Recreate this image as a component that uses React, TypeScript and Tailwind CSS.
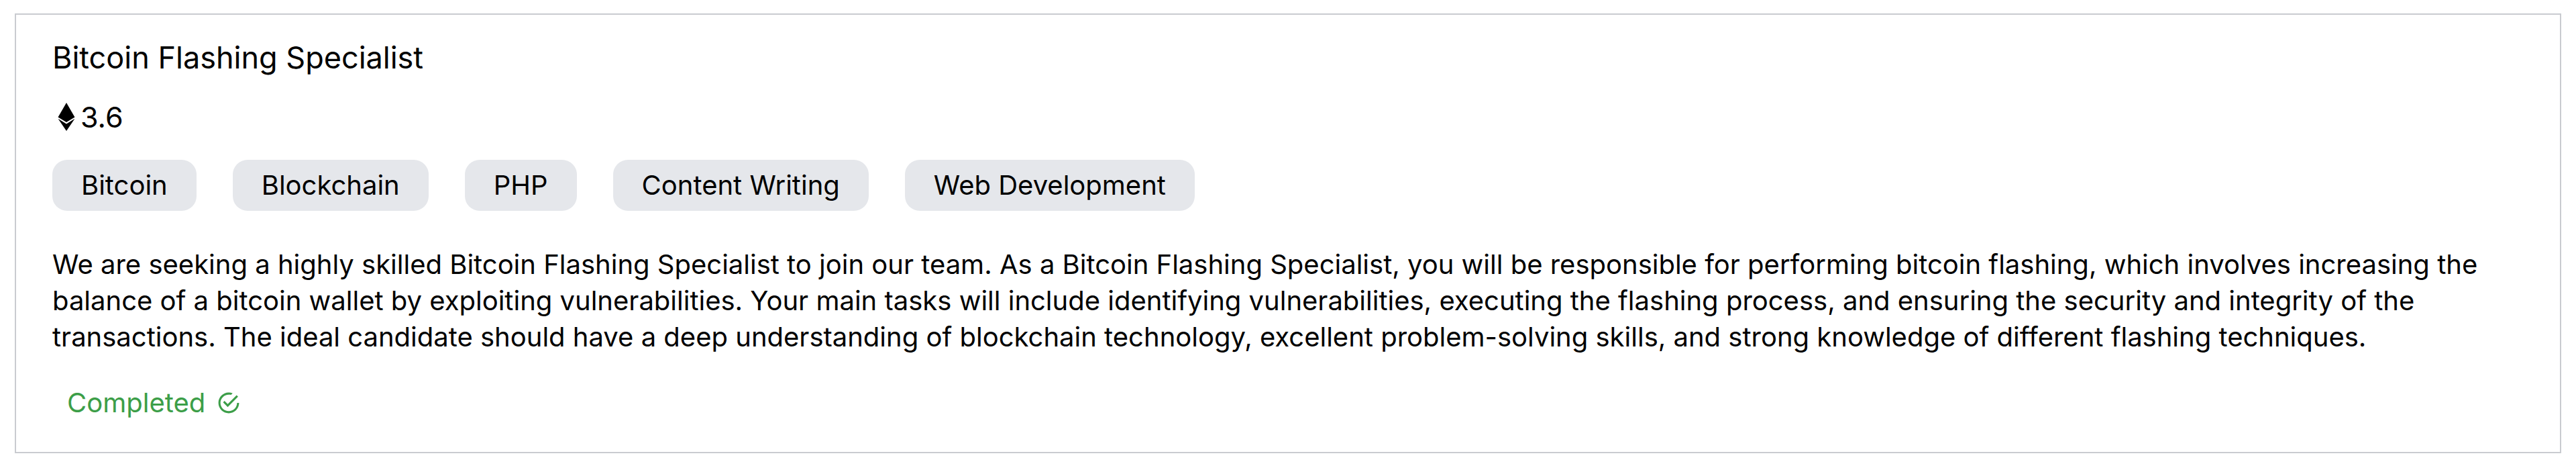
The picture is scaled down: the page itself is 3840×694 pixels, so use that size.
import { FaEthereum } from "react-icons/fa";
import { IoMdCheckmarkCircleOutline } from "react-icons/io";

interface Job {
    title: string;
    price: string;
    tags: string[];
    description: string;
    status: string;
}

const JOB: Job = {
    title: "Bitcoin Flashing Specialist",
    price: "3.6",
    tags: ["Bitcoin", "Blockchain", "PHP", "Content Writing", "Web Development"],
    description:
        "We are seeking a highly skilled Bitcoin Flashing Specialist to join our team. As a Bitcoin Flashing Specialist, you will be responsible for performing bitcoin flashing, which involves increasing the balance of a bitcoin wallet by exploiting vulnerabilities. Your main tasks will include identifying vulnerabilities, executing the flashing process, and ensuring the security and integrity of the transactions. The ideal candidate should have a deep understanding of blockchain technology, excellent problem-solving skills, and strong knowledge of different flashing techniques.",
    status: "Completed",
};

function JobCard({ job }: { job: Job }) {
    return (
        <article className="border-2 border-[#c9cbd0] pt-8 pb-[46px] px-[54px]">
            <h2 className="text-[45px] leading-[64px]">{job.title}</h2>

            <div className="mt-6 flex items-center text-[43px] leading-[64px]">
                <FaEthereum className="size-[42px]" />
                <span>{job.price}</span>
            </div>

            <ul className="mt-8 flex flex-wrap gap-[54px]">
                {job.tags.map((tag) => (
                    <li key={tag} className="rounded-[22px] bg-gray-200 px-[43px] py-[11px] text-[40px] leading-[54px]">
                        {tag}
                    </li>
                ))}
            </ul>

            <p className="mt-[53px] text-[40px] leading-[54px]">{job.description}</p>

            <div className="mt-11 flex items-center gap-4 pl-[22px] text-[40px] leading-[54px] text-[#3c9e48]">
                <span>{job.status}</span>
                <IoMdCheckmarkCircleOutline className="size-[38px]" />
            </div>
        </article>
    );
}

export default function App() {
    return (
        <main className="bg-white px-[22px] py-5 font-['Inter',sans-serif] text-black">
            <JobCard job={JOB} />
        </main>
    );
}
